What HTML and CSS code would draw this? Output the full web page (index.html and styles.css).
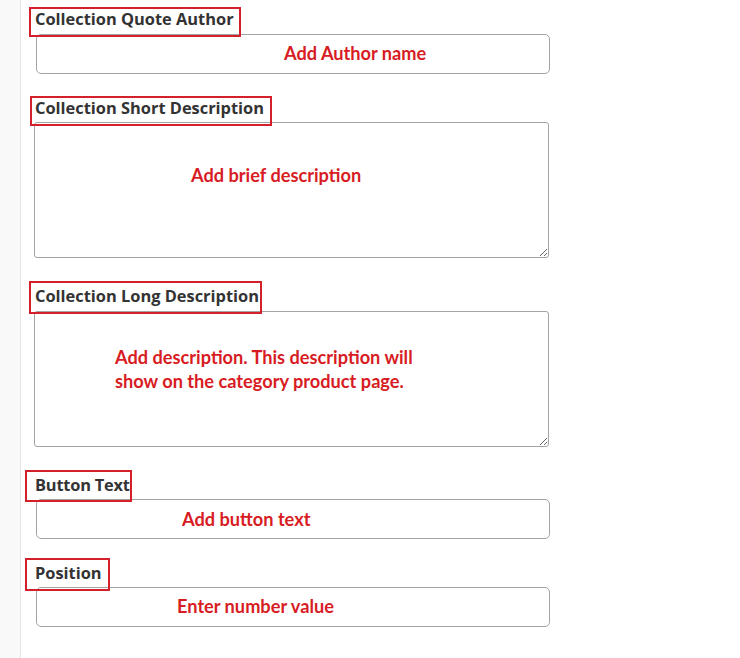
FILE: index.html
```html
<!DOCTYPE html>
<html>
<head>
<meta charset="utf-8">
<link rel="stylesheet" href="styles.css">
</head>
<body>
<div class="page">
  <aside class="side"></aside>
  <main class="form">
    <div class="group g1">
      <label class="lbl">Collection Quote Author</label>
      <input class="field f1" type="text" placeholder="Add Author name">
    </div>
    <div class="group g2">
      <label class="lbl">Collection Short Description</label>
      <textarea class="area a2" placeholder="Add brief description"></textarea>
    </div>
    <div class="group g3">
      <label class="lbl">Collection Long Description</label>
      <textarea class="area a3" placeholder="Add description. This description will&#10;show on the category product page."></textarea>
    </div>
    <div class="group g4">
      <label class="lbl">Button Text</label>
      <input class="field f4" type="text" placeholder="Add button text">
    </div>
    <div class="group g5">
      <label class="lbl">Position</label>
      <input class="field f5" type="text" placeholder="Enter number value">
    </div>
  </main>
</div>
</body>
</html>
```
FILE: styles.css
```css
* { box-sizing: border-box; }
html, body { margin: 0; padding: 0; background: #fff; }
.page { display: flex; width: 740px; height: 658px; overflow: hidden; }
.side { width: 21px; flex: none; background: #f9f9f9; border-right: 1px solid #e4e4e4; }
.form { flex: 1; display: flex; flex-direction: column; }
.group { display: flex; flex-direction: column; align-items: flex-start; }
.lbl {
  position: relative; z-index: 1;
  display: inline-block;
  border: 2px solid #d3202a;
  font-family: "Open Sans", "Noto Sans", sans-serif;
  font-weight: 700; font-size: 16.4px; color: #333;
  line-height: 22px;
  white-space: nowrap;
}
.field, .area {
  display: block;
  border: 1px solid #a3a3a3;
  background: #fff;
  font-family: Lato, "Noto Sans", sans-serif;
  font-weight: 700; font-size: 18.2px;
  outline: none; margin: 0;
}
.field { height: 40px; width: 514px; border-radius: 5px; margin-left: 15px; padding-top: 0; padding-bottom: 0; }
.area { height: 136px; width: 515px; border-radius: 3px; margin-left: 13px; line-height: 24px; resize: vertical; }
.field::placeholder, .area::placeholder { color: #d81c24; opacity: 1; }

.g1 { margin-top: 7px; }
.g1 .lbl { margin-left: 8px; width: 212px; padding: 0 0 0 4px; height: 30px; margin-bottom: -3px; line-height: 20px; }
.f1 { padding-left: 247px; padding-bottom: 2px; }

.g2 { margin-top: 22px; }
.g2 .lbl { margin-left: 9px; width: 242px; padding: 0 0 0 3px; height: 30px; margin-bottom: -4px; line-height: 19px; }
.a2 { padding: 40px 10px 0 156px; }

.g3 { margin-top: 23px; }
.g3 .lbl { margin-left: 8px; width: 233px; padding: 2px 0 0 4px; height: 33px; margin-bottom: -3px; }
.a3 { padding: 33px 10px 0 80px; }

.g4 { margin-top: 23px; }
.g4 .lbl { margin-left: 4px; width: 107px; padding: 2px 0 0 8px; height: 32px; margin-bottom: -3px; letter-spacing: -0.2px; }
.f4 { padding-left: 145px; }

.g5 { margin-top: 19px; }
.g5 .lbl { margin-left: 4px; width: 85px; padding: 2px 0 0 8px; height: 33px; margin-bottom: -4px; }
.f5 { padding-left: 140px; padding-bottom: 2px; }
```
